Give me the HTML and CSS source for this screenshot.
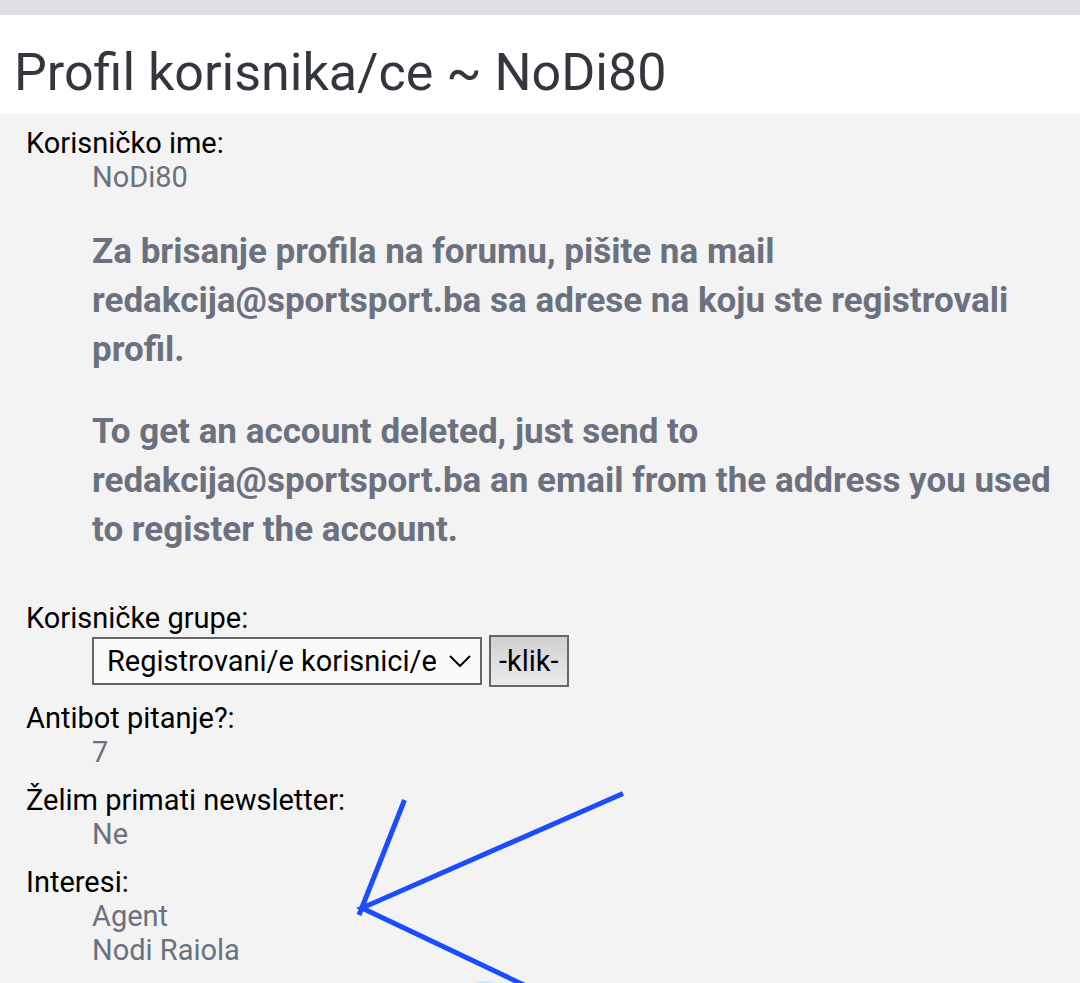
FILE: index.html
```html
<!DOCTYPE html>
<html lang="bs">
<head>
  <meta charset="UTF-8">
  <meta name="viewport" content="width=device-width, initial-scale=1">
  <title>Profil korisnika/ce ~ NoDi80</title>
  <link rel="stylesheet" href="styles.css">
</head>
<body>

  <header class="page-header">
    <h1>Profil korisnika/ce ~ NoDi80</h1>
  </header>

  <main class="panel">
    <dl class="details">
      <dt>Korisničko ime:</dt>
      <dd>
        NoDi80
        <p class="notice">Za brisanje profila na forumu, pišite na mail redakcija@sportsport.ba sa adrese na koju ste registrovali profil.</p>
        <p class="notice">To get an account deleted, just send to redakcija@sportsport.ba an email from the address you used to register the account.</p>
      </dd>

      <dt><label for="group">Korisničke grupe:</label></dt>
      <dd>
        <form class="group-form">
          <span class="select-wrap">
            <select id="group" name="g">
              <option>Registrovani/e korisnici/e</option>
            </select>
            <svg class="chevron" viewBox="0 0 22 12" aria-hidden="true"><path d="M1 1L11 11L21 1"/></svg>
          </span>
          <button type="button">-klik-</button>
        </form>
      </dd>

      <dt>Antibot pitanje?:</dt>
      <dd>7</dd>

      <dt>Želim primati newsletter:</dt>
      <dd>Ne</dd>

      <dt>Interesi:</dt>
      <dd>Agent<br>Nodi Raiola</dd>
    </dl>

    <svg class="arrow" viewBox="0 0 270 193" aria-hidden="true">
      <ellipse cx="129" cy="195" rx="12" ry="4"/>
      <path d="M48.5 10L3 125M267 3.5L6 118L168 195"/>
    </svg>
  </main>

</body>
</html>
```

FILE: styles.css
```css
* {
  box-sizing: border-box;
}

body {
  margin: 0;
  min-height: 100vh;
  display: flex;
  flex-direction: column;
  font-family: Roboto, "Liberation Sans", sans-serif;
  font-size: 29px;
  line-height: 34px;
  color: #000;
  background: #f3f3f3;
}

.page-header {
  padding: 27px 14px 11px;
  border-top: 15px solid #dfe0e4;
  background: #fff;
}

h1 {
  margin: 0;
  font-size: 52px;
  line-height: 61px;
  font-weight: 400;
  color: #33363d;
}

.panel {
  position: relative;
  flex: 1;
  padding: 12px 26px 16px;
}

.details {
  margin: 0;
}

dd {
  display: flow-root;
  margin: 0 0 14px 66px;
  color: #6b717e;
}

dd:last-child {
  margin-bottom: 0;
}

.notice {
  margin: 33px 0;
  font-size: 35px;
  line-height: 49px;
  font-weight: 700;
}

.group-form {
  display: flex;
  align-items: center;
  gap: 7px;
}

.select-wrap {
  position: relative;
}

select {
  display: block;
  appearance: none;
  width: 390px;
  height: 48px;
  padding: 0 44px 0 13px;
  border: 2px solid #666;
  border-radius: 0;
  background: #fafafa;
  color: #000;
  font: inherit;
}

.chevron {
  position: absolute;
  right: 11px;
  top: 18px;
  width: 22px;
  height: 12px;
  fill: none;
  stroke: #000;
  stroke-width: 2;
}

button {
  height: 52px;
  padding: 0 8px;
  border: 2px solid #666;
  background: linear-gradient(#d0d0d0, #ebebeb);
  color: #000;
  font: inherit;
}

.arrow {
  position: absolute;
  left: 356px;
  bottom: 0;
  width: 270px;
  height: 193px;
}

.arrow path {
  fill: none;
  stroke: #1a4dff;
  stroke-width: 5;
}

.arrow ellipse {
  fill: #c4e8fc;
}
```
